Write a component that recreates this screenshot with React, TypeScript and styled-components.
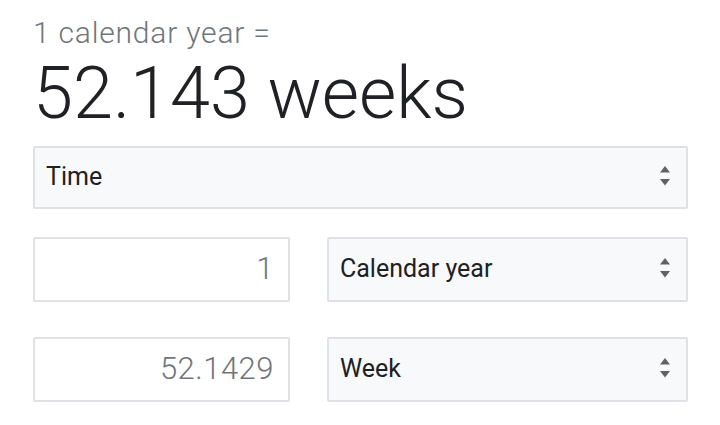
import styled, { createGlobalStyle } from "styled-components";

const GlobalStyle = createGlobalStyle`
  body {
    margin: 0;
    background: #ffffff;
    font-family: Roboto, "Liberation Sans", Arial, sans-serif;
  }
`;

function SortArrows() {
  return (
    <svg width="10" height="20" viewBox="0 0 10 20">
      <path d="M5 0 L10 6.5 H0 Z" fill="#5f6368" />
      <path d="M5 19.5 L10 13 H0 Z" fill="#5f6368" />
    </svg>
  );
}

function Converter() {
  return (
    <Wrapper>
      <Equation>1 calendar year =</Equation>
      <Result>52.143 weeks</Result>
      <SelectBox wide>
        <SelectLabel>Time</SelectLabel>
        <SortArrows />
      </SelectBox>
      <Row>
        <ValueBox>1</ValueBox>
        <SelectBox>
          <SelectLabel>Calendar year</SelectLabel>
          <SortArrows />
        </SelectBox>
      </Row>
      <Row>
        <ValueBox>52.1429</ValueBox>
        <SelectBox>
          <SelectLabel>Week</SelectLabel>
          <SortArrows />
        </SelectBox>
      </Row>
    </Wrapper>
  );
}

export default function App() {
  return (
    <>
      <GlobalStyle />
      <Converter />
    </>
  );
}

const Wrapper = styled.div`
  width: 655px;
  padding: 15px 0 0 33px;
  display: flex;
  flex-direction: column;
`;

const Equation = styled.div`
  font-size: 30px;
  font-weight: 300;
  line-height: 35px;
  letter-spacing: 0.8px;
  color: #70757a;
`;

const Result = styled.div`
  font-size: 72px;
  font-weight: 300;
  line-height: 88px;
  color: #202124;
  margin-bottom: 8px;
`;

const SelectBox = styled.div<{ wide?: boolean }>`
  box-sizing: border-box;
  flex: ${(props) => (props.wide ? "none" : "1")};
  height: ${(props) => (props.wide ? "63px" : "65px")};
  margin-bottom: ${(props) => (props.wide ? "28px" : "0")};
  display: flex;
  align-items: center;
  justify-content: space-between;
  padding: 0 16px 3px 11px;
  background: #f8f9fa;
  border: 2px solid #dfe1e5;
  border-radius: 2px;
`;

const SelectLabel = styled.span`
  font-size: 25px;
  color: #202124;
`;

const Row = styled.div`
  display: flex;
  gap: 37px;
  margin-bottom: 35px;
`;

const ValueBox = styled.div`
  box-sizing: border-box;
  width: 257px;
  height: 65px;
  display: flex;
  align-items: center;
  justify-content: flex-end;
  padding: 0 14px 2px;
  border: 2px solid #dfe1e5;
  border-radius: 2px;
  font-size: 31px;
  font-weight: 300;
  letter-spacing: 0.5px;
  color: #70757a;
`;
